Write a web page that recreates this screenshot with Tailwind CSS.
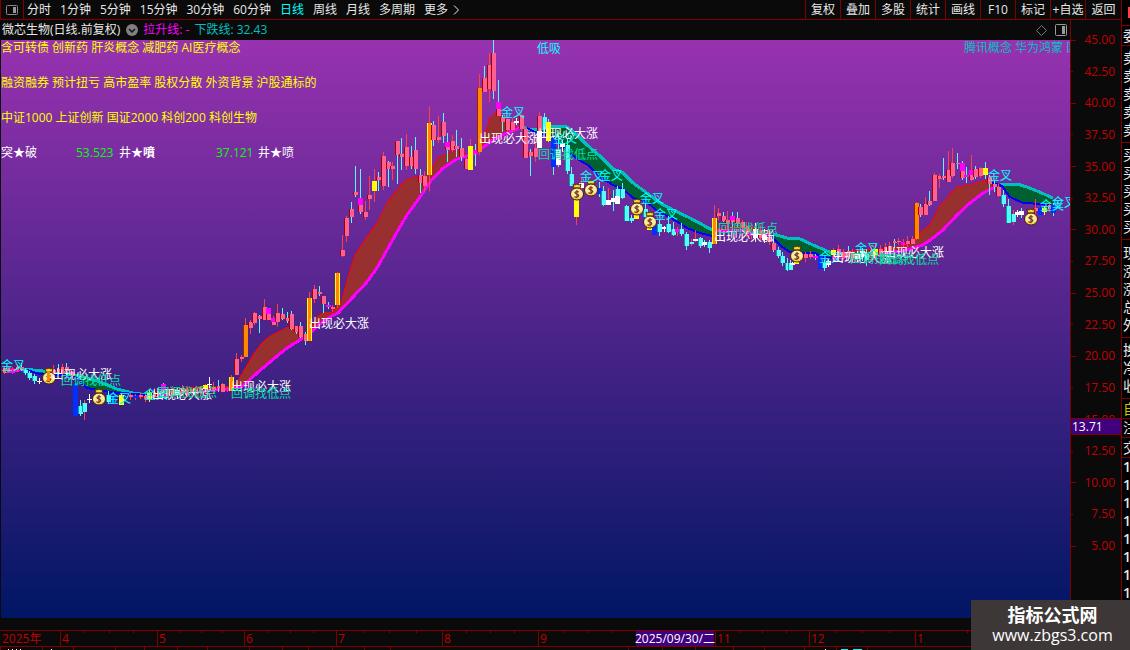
<!DOCTYPE html>
<html lang="zh-CN">
<head>
    <meta charset="UTF-8">
    <title>微芯生物 日线</title>
    <script src="https://cdn.jsdelivr.net/npm/@tailwindcss/browser@4"></script>
</head>
<body class="relative min-h-screen overflow-hidden bg-[#0a0a0a] font-['Open_Sans','Noto_Sans_CJK_SC',sans-serif] text-xs leading-4 text-[#e8e8e8]">
    <div class="flex">
        <main class="min-w-0 flex-1">
            <nav class="flex h-5 items-center border-b border-[#800000]">
                <button aria-label="侧栏" class="flex h-full w-6 items-center justify-center border-r border-l border-[#800000]">
                    <svg class="h-3 w-3" viewBox="0 0 12 12"><rect x="0.5" y="1.5" width="11" height="9" rx="1" fill="none" stroke="#888"/><rect x="7" y="3" width="3" height="6" fill="#999"/></svg>
                </button>
                <div class="flex flex-1 items-center gap-[9px] pl-[3px] whitespace-nowrap">
                    <button>分时</button>
                    <button>1分钟</button>
                    <button>5分钟</button>
                    <button>15分钟</button>
                    <button>30分钟</button>
                    <button>60分钟</button>
                    <button class="text-[#00ffff]">日线</button>
                    <button>周线</button>
                    <button>月线</button>
                    <button>多周期</button>
                    <button class="flex items-center gap-1">更多
                        <svg class="h-[10px] w-2" viewBox="0 0 8 10"><path d="M2 .5l4.500 4.500-4.500 4.500" fill="none" stroke="#e8e8e8"/></svg>
                    </button>
                </div>
                <div class="flex h-full whitespace-nowrap">
                    <button class="w-[35px] border-l border-[#800000]">复权</button>
                    <button class="w-[35px] border-l border-[#800000]">叠加</button>
                    <button class="w-[35px] border-l border-[#800000]">多股</button>
                    <button class="w-[35px] border-l border-[#800000]">统计</button>
                    <button class="w-[35px] border-l border-[#800000]">画线</button>
                    <button class="w-[35px] border-l border-[#800000]">F10</button>
                    <button class="w-[35px] border-l border-[#800000]">标记</button>
                    <button class="w-[35px] border-l border-[#800000]">+自选</button>
                    <button class="w-9 border-l border-[#800000]">返回</button>
                </div>
            </nav>

            <div class="flex">
                <section class="min-w-0 flex-1">
                    <div class="flex h-5 items-center gap-[5px] pl-[2px] whitespace-nowrap">
                        <h1 class="pr-px">微芯生物(日线.前复权)</h1>
                        <svg class="h-3 w-3" viewBox="0 0 12 12"><circle cx="6" cy="6" r="6" fill="#808080"/><path d="M3 5l3 3 3-3" fill="none" stroke="#111" stroke-width="1.5"/></svg>
                        <span class="text-[#ff00ff]">拉升线: -</span>
                        <span class="text-[#00c0c0]">下跌线: 32.43</span>
                        <span class="ml-auto flex items-center gap-2 pr-[3px]">
                            <svg class="h-[11px] w-[11px]" viewBox="0 0 11 11"><path d="M5.500 .5l5 5-5 5-5-5z" fill="none" stroke="#777"/></svg>
                            <svg class="h-3 w-3" viewBox="0 0 12 12"><rect x="0.5" y="0.5" width="11" height="11" rx="1" fill="none" stroke="#999"/><rect x="7" y="2" width="3" height="8" fill="#999"/></svg>
                        </span>
                    </div>
                    <div class="relative border-l border-[#0a0a0a]">
                        <svg id="chart" class="block w-full" viewBox="1 40 1069 578" shape-rendering="crispEdges">
                            <defs>
                                <linearGradient id="sky" x1="0" y1="0" x2="0" y2="1">
                                    <stop offset="0" stop-color="#9832b0"/>
                                    <stop offset="1" stop-color="#001664"/>
                                </linearGradient>
                                <g id="bag" shape-rendering="geometricPrecision">
                                    <path d="M-3-5L-4-9l2 1 2-1 2 1 2-1-1 4z" fill="#f6dc3a" stroke="#5a3000"/>
                                    <ellipse cx="0" cy="1" rx="6.500" ry="6" fill="#f8eca0" stroke="#4a1800"/>
                                    <path d="M-5 3q5 4 10 0q-1 3-5 3t-5-3" fill="#f0c820"/>
                                    <path d="M2-1q-2-1-3.500 0T0 1t1 2.500-3.500 0M0-3v8" fill="none" stroke="#7a3418" stroke-width="1.200"/>
                                </g>
                            </defs>
                            <rect x="1" y="40" width="1069" height="578" fill="url(#sky)"/>
                            <g id="bands" fill="none"></g>
                            <g id="candles"></g>
                            <g id="bags"></g>
                            <g id="signals" font-size="12"></g>
                        </svg>
                        <div class="absolute inset-0 flex flex-col gap-[19px] overflow-hidden whitespace-nowrap text-[#ffff00]">
                            <div class="flex justify-between">
                                <p>含可转债 创新药 肝炎概念 减肥药 AI医疗概念</p>
                                <p class="w-[106px] overflow-hidden text-[#00c0c0]">腾讯概念 华为鸿蒙 国产芯片</p>
                            </div>
                            <p>融资融券 预计扭亏 高市盈率 股权分散 外资背景 沪股通标的</p>
                            <p>中证1000 上证创新 国证2000 科创200 科创生物</p>
                            <p class="flex text-white">
                                <span class="w-[75px]">突★破</span>
                                <span class="w-[43px] text-[#00ff00]">53.523</span>
                                <span class="w-[97px]">井★<b>噴</b></span>
                                <span class="w-[42px] text-[#00ff00]">37.121</span>
                                <span>井★喷</span>
                            </p>
                        </div>
                    </div>
                    <div class="h-3"></div>
                </section>

                <div class="relative w-[51px] border-l border-[#800000] pt-3 text-[#c00000]">
                    <div id="prices" class="flex h-[522px] flex-col justify-between"></div>
                    <div class="absolute top-[398px] right-0 left-0 border-y border-[#800000] bg-[#400080] pl-px leading-[15px] text-white">13.71</div>
                </div>
            </div>

            <div class="grid h-[17px] grid-cols-[60fr_97fr_87fr_92fr_106fr_96fr_98fr_79fr_94fr_106fr_206fr] border-y border-[#800000] leading-[15px] text-[#c00000]">
                <span class="min-w-0 pl-[2px] whitespace-nowrap">2025年</span>
                <span class="month relative border-l border-[#800000] pl-px">4</span>
                <span class="month relative border-l border-[#800000] pl-px">5</span>
                <span class="month relative border-l border-[#800000] pl-px">6</span>
                <span class="month relative border-l border-[#800000] pl-px">7</span>
                <span class="month relative border-l border-[#800000] pl-px">8</span>
                <span class="month relative border-l border-[#800000] pl-px">9</span>
                <span class="mr-px flex min-w-0 justify-center bg-[#400080] whitespace-nowrap text-white">2025/09/30/二</span>
                <span class="month relative border-l border-[#800000] pl-px">11</span>
                <span class="month relative border-l border-[#800000] pl-px">12</span>
                <span class="month relative border-l border-[#800000] pl-px">1</span>
            </div>
            <svg class="block h-[3px] w-full" viewBox="0 0 1121 3" preserveAspectRatio="none" shape-rendering="crispEdges">
                <path d="M.5 0v3M42.500 0v3M73.500 0v3M115.500 0v3M144.500 0v3M177.500 0v3M207.500 0v3M249.500 0v3M282.500 0v3M308.500 0v3M332.500 0v3M364.500 0v3M390.500 0v3M628.500 0v3M662.500 0v3M695.500 0v3M733.500 0v3M764.500 0v3M804.500 0v3M836.500 0v3M867.500 0v3" stroke="#800000"/>
                <path d="M8 2.500h1M12 2.500h1M16 2.500h1M20 2.500h1M51 2.500h1M825 2.500h1" stroke="#fff"/>
                <path d="M841 2.500h7M853 2.500h9" stroke="#00ffff"/>
            </svg>
        </main>

        <aside class="w-[9px] overflow-hidden border-l border-[#800000] bg-black text-sm leading-[18px] whitespace-nowrap">
            <div class="flex h-[26px] justify-end border-b border-[#800000] pt-[7px]"><i class="h-[11px] w-[2px] bg-[#ff4040]"></i></div>
            <div class="border-b border-[#800000] pt-px pl-px">委比</div>
            <div class="border-b border-[#800000] pt-[3px] pb-[3px] pl-px"><p>卖五</p><p>卖四</p><p>卖三</p><p>卖二</p><p>卖一</p></div>
            <div class="border-b border-[#800000] pt-[3px] pb-[3px] pl-px"><p>买一</p><p>买二</p><p>买三</p><p>买四</p><p>买五</p></div>
            <div class="border-b border-[#800000] pt-1 pb-[3px] pl-px"><p>现价</p><p>涨跌</p><p>涨幅</p><p>总量</p><p>外盘</p></div>
            <div class="border-b border-[#800000] pt-[3px] pb-[3px] pl-px"><p>换手</p><p>净资</p><p>收益</p></div>
            <div class="border-b border-[#800000] pt-px pl-px text-[#c8c800]">自选</div>
            <div class="border-b border-[#800000] pl-px">注册</div>
            <div class="border-b border-[#800000] pt-px pl-px">交易</div>
            <div class="pl-px font-semibold"><p>14</p><p>14</p><p>14</p><p>14</p><p>14</p><p>14</p><p>14</p><p>14</p></div>
        </aside>
    </div>

    <div class="absolute right-0 bottom-0 flex h-[50px] w-[159px] flex-col items-center justify-center bg-[#3d3837] pl-1 text-white">
        <strong class="text-lg leading-5">指标公式网</strong>
        <a href="#" class="text-base leading-5">www.zbgs3.com</a>
    </div>

    <script>
        const NS = 'http://www.w3.org/2000/svg';

        function add(parent, tag, attrs, text) {
            const el = document.createElementNS(NS, tag);
            for (const key in attrs) el.setAttribute(key, attrs[key]);
            if (text) el.textContent = text;
            document.getElementById(parent).appendChild(el);
        }

        // price scale, every second mark is a long one
        const prices = document.getElementById('prices');
        for (let i = 0; i < 17; i++) {
            const row = document.createElement('div');
            row.className = 'flex items-center justify-between pr-[6px]';
            const tick = i % 2 ? 'w-[2px]' : 'w-[5px]';
            row.innerHTML = `<i class="h-px ${tick} bg-[#800000]"></i><span>${(45 - i * 2.5).toFixed(2)}</span>`;
            prices.appendChild(row);
        }

        document.querySelectorAll('.month').forEach(cell => {
            const ticks = document.createElement('i');
            ticks.className = 'absolute inset-x-0 top-0 flex justify-evenly';
            ticks.innerHTML = '<b class="h-[2px] w-px bg-[#800000]"></b>'.repeat(3);
            cell.appendChild(ticks);
        });

        // [kind, upper edge, lower edge]
        const bands = [
            ['down', '23,369 43,371 67,373 87,378 100,382 117,389 133,393 147,395', '27,370 40,374 75,376 87,388 110,392 147,395'],
            ['up', '2,369 12,368 23,369', '2,372 15,371 23,369'],
            ['up', '147,394 180,389 205,386 228,386', '147,397 170,394 205,391 228,389'],
            ['up', '228,388 236,384 253,355 262,343 270,336 288,327 300,332 307,337', '220,391 227,389 243,386 257,373 270,362 287,348 303,338 307,337'],
            ['up', '307,337 317,317 323,313 333,312 342,300 348,277 355,255 367,237 377,223 387,203 397,190 407,179 417,177 423,180 430,173 438,158 450,152 460,151 468,155 475,153', '307,337 317,326 330,317 338,313 353,297 367,282 377,268 387,250 397,232 407,215 420,197 430,182 443,168 457,159 475,153'],
            ['up', '475,153 480,150 485,135 490,118 495,113 500,114 503,118 510,125 518,128', '475,153 482,148 493,140 502,135 517,129 522,126'],
            ['down', '523,127 530,130 540,129 557,126 567,127 577,135 587,145 600,156 613,169 622,172 633,183 647,193 660,203 673,210 690,218 703,225 712,230', '527,128 537,133 552,136 563,147 577,159 588,165 600,177 613,185 623,189 633,198 647,202 657,211 673,219 687,228 700,233 712,236'],
            ['up', '716,229 740,226 755,228 770,233', '716,231 740,230 770,235'],
            ['down', '773,234 787,238 800,239 813,245 827,251 832,253', '773,238 782,247 790,252 800,253 815,253 822,257 832,258'],
            ['up', '832,255 860,250 880,249 907,245 917,238 923,230 930,225 940,205 947,198 957,187 970,185 985,180 993,182 997,185', '832,258 870,255 900,251 910,249 923,245 933,238 943,230 957,215 970,203 983,193 995,187'],
            ['down', '1000,184 1017,184 1027,187 1037,191 1053,198', '990,182 1002,186 1010,197 1023,203 1043,204 1053,206']
        ];
        bands.forEach(([kind, upper, lower]) => {
            const up = kind === 'up';
            const back = lower.split(' ').reverse().join(' ');
            add('bands', 'polygon', { points: upper + ' ' + back, fill: up ? '#993030' : '#006030' });
            add('bands', 'polyline', { points: upper, stroke: up ? '#ff0000' : '#00c0c0', 'stroke-width': up ? 1 : 3 });
            add('bands', 'polyline', { points: lower, stroke: up ? '#ff00ff' : '#0000ff', 'stroke-width': up ? 3 : 2 });
        });

        // x, high, body top, body bottom, low, body colour, wick colour
        const candles = `
            4 366 368 373 374 p r,8 367 369 372 373 p r,12 367 369 373 374 m r,17 364 367 370 372 p r,21 363 367 370 371 p c,
            25 368 370 373 375 c c,29 371 373 378 380 c c,34 374 376 381 384 c c,39 378 381 382 384 w w,
            53 365 370 374 378 p r,58 364 369 372 374 p c,62 364 367 374 377 p r,66 363 367 371 375 p c,71 369 372 376 378 p r,
            75 381 384 416 417 b b,80 400 406 414 416 c c,84 400 403 412 420 c r,89 394 399 400 403 w w,
            108 391 395 402 404 c c,113 391 396 401 404 b b,121 393 395 405 405 y y,130 393 395 397 400 p r,135 394 396 398 400 b r,140 392 395 397 399 p r,
            145 394 396 399 402 p r,149 390 393 399 402 y y,154 388 393 397 399 p r,158 388 391 396 399 p r,163 383 384 390 398 m c,168 387 390 396 399 p r,172 386 389 395 397 p r,177 388 390 395 398 w w,182 385 388 393 396 p r,186 386 390 395 398 p r,191 387 389 393 395 p r,196 386 389 394 398 p r,200 386 388 392 396 p r,205 384 385 389 394 y r,209 377 384 385 388 w w,213 382 387 390 394 p r,218 380 386 388 392 p c,222 383 384 392 392 p r,227 388 389 391 392 m r,
            231 375 377 391 391 g r,236 353 359 375 375 p r,241 355 357 359 362 p r,245 318 325 357 357 o r,250 320 322 328 334 p r,254 312 313 323 325 p r,259 315 316 319 333 p c,264 299 307 320 320 p r,268 308 308 320 320 p r,268 308 308 314 314 m m,273 316 318 325 325 p r,273 318 318 322 322 m m,277 304 313 322 327 p r,282 308 314 319 320 p c,287 312 318 321 323 p c,291 311 314 329 330 p c,296 326 326 332 334 p c,300 322 326 337 338 p c,305 332 334 341 345 p c,
            309 292 298 341 341 g r,314 285 289 299 303 p r,319 286 292 294 296 p c,323 296 296 304 313 p c,328 302 305 307 309 m c,332 305 307 309 312 p r,337 272 273 305 308 g r,342 235 250 256 257 p r,346 216 218 236 242 p r,351 202 209 217 223 p c,355 166 192 195 197 p c,360 169 198 212 214 p c,360 198 198 205 205 m m,365 201 212 217 220 p r,369 176 195 199 210 p r,374 169 181 191 202 y r,378 172 177 180 191 p c,383 152 156 186 190 p r,388 161 162 169 187 p c,392 162 166 169 180 p r,397 141 141 155 184 p c,401 138 154 157 170 p c,406 134 147 166 170 p r,411 146 157 166 169 p c,415 137 150 169 174 p c,420 169 175 183 193 p c,424 171 176 186 192 p r,
            429 106 123 175 191 g r,433 121 125 140 146 p c,438 116 137 140 143 p r,443 113 122 136 143 p c,447 133 142 150 162 p c,447 142 142 147 147 m m,452 135 141 150 152 p r,456 130 146 149 157 p c,461 138 148 157 161 p c,466 157 159 169 169 p r,470 139 146 170 170 y r,475 144 150 154 166 m c,479 74 88 152 155 o r,484 66 78 92 92 p c,489 53 65 89 102 p r,493 40 53 91 99 p c,498 80 102 116 116 p c,498 102 102 109 109 m m,502 115 118 122 132 p c,507 117 119 130 132 p r,512 118 122 130 132 p r,516 118 121 123 125 w w,521 113 115 129 131 p r,525 126 129 158 158 p r,530 149 152 156 176 p c,535 141 148 157 162 p r,539 112 116 131 131 p r,539 131 131 148 148 w w,544 113 117 129 133 c c,548 119 122 141 142 y c,553 136 138 167 175 b c,558 140 149 165 167 w c,562 140 143 147 152 w w,567 138 145 171 174 c c,571 167 174 186 186 c c,576 198 200 217 225 y r,581 178 183 188 190 w r,
            599 182 188 194 197 b c,603 186 191 205 206 c c,608 188 200 205 205 w r,613 190 198 202 211 w c,617 186 189 196 198 c c,617 196 196 204 204 w w,622 183 189 198 199 c c,626 205 206 221 221 c c,631 215 218 221 223 c c,636 214 215 219 219 y y,645 203 209 217 222 c c,649 226 227 230 230 y y,654 218 226 235 235 b b,659 220 224 232 236 c c,664 226 227 229 232 w w,668 216 224 232 233 c c,673 222 229 235 236 c c,677 227 229 232 236 m r,681 223 229 234 236 c c,686 232 234 246 250 c c,691 239 242 244 246 c r,695 230 239 241 242 w r,700 237 238 246 248 c c,704 240 242 245 247 w c,709 240 242 248 253 c c,714 205 218 244 244 g r,718 208 213 216 220 p r,723 212 216 221 222 p c,727 211 220 224 230 p r,732 212 216 222 228 p c,732 216 216 220 220 m m,737 212 218 224 227 p c,742 220 222 228 231 p r,746 222 227 234 237 p r,751 227 232 236 239 m r,755 223 229 238 242 w w,760 225 230 238 241 p r,764 229 235 240 243 w w,769 230 237 242 245 p r,773 235 243 250 252 p c,778 247 250 256 258 c c,782 252 256 263 266 c c,787 258 263 270 271 c c,790 260 263 270 270 c c,792 262 263 265 265 w w,796 260 261 264 264 y y,
            805 252 254 258 262 p r,810 251 254 257 259 p r,815 254 256 258 260 m c,820 254 256 269 269 b b,824 260 263 268 271 c c,828 259 261 265 267 w w,833 248 250 255 258 y r,838 245 249 255 259 p r,843 249 252 258 260 p r,848 246 251 257 260 p c,852 249 253 258 262 p r,857 251 254 259 263 w w,862 248 251 257 261 w c,866 249 254 260 266 c c,871 245 250 255 260 p r,875 243 249 255 258 y r,880 245 249 254 256 p r,885 243 247 252 256 p r,889 242 246 251 254 p r,894 239 241 243 248 p c,898 238 241 242 245 p r,903 239 242 245 248 m r,907 236 241 244 247 p r,912 236 239 244 244 p r,
            916 202 203 239 240 o r,920 204 207 215 217 p c,925 197 204 215 215 p r,929 191 201 205 206 p c,934 173 175 201 201 p r,939 174 176 179 188 p r,943 158 176 178 180 p c,948 151 170 182 182 p r,952 148 163 176 178 p r,957 153 163 164 169 p c,962 161 163 178 180 p c,962 163 163 171 171 m m,966 167 175 177 183 m c,971 155 170 180 181 p r,971 170 170 175 175 m m,975 166 169 177 179 p c,980 167 168 176 178 p r,985 162 168 175 179 y c,989 175 177 184 195 p c,994 180 184 187 192 p c,998 184 187 196 197 p r,1003 190 195 204 207 c c,1008 199 206 223 223 c c,1013 210 214 222 225 c r,1017 210 212 215 217 w w,1021 208 211 215 218 w c,1035 199 208 211 215 p r,1040 202 208 215 215 b b,1044 206 208 212 215 y y,1049 202 205 209 212 p r,1053 203 205 213 216 b c`;
        const colors = { p: '#ff6090', r: '#ff4040', c: '#54fcfc', m: '#ff00ff', o: '#ff8800', g: '#ff8800', y: '#ffff00', b: '#0030ff', w: '#ffffff' };
        const edges = { p: '#a00000', o: '#a02000', g: '#ffff00', c: '#00a0a0' };
        candles.split(',').forEach(line => {
            const [x, high, top, bottom, low, body, wick] = line.trim().split(' ').map((v, i) => i < 5 ? Number(v) : v);
            add('candles', 'rect', { x: x, y: high, width: 1, height: low - high, fill: colors[wick] });
            add('candles', 'rect', { x: x - 2, y: top, width: 5, height: bottom - top, fill: edges[body] || colors[body] });
            add('candles', 'rect', { x: x - 1, y: top, width: body === 'g' ? 3 : 4, height: bottom - top, fill: colors[body] });
        });

        [[49, 377], [99, 398], [577, 193], [591, 189], [637, 208], [650, 221], [797, 255], [1031, 218]].forEach(([x, y]) => {
            add('bags', 'use', { href: '#bag', x: x, y: y });
        });
        add('bags', 'rect', { x: 47, y: 371, width: 3, height: 10, fill: '#ff8800' });

        const labels = { g: ['金叉', '#00ffff'], h: ['回调找低点', '#00e0a0'], z: ['出现必大涨', '#ffffff'], d: ['低吸', '#00ffff'] };
        const signals = [
            ['d', 537, 53], ['g', 501, 117], ['h', 538, 159], ['g', 553, 143], ['z', 479, 143], ['z', 538, 138],
            ['g', 580, 181], ['g', 599, 180], ['g', 640, 203], ['g', 654, 219], ['z', 714, 241], ['h', 718, 233],
            ['g', 819, 262], ['g', 855, 253], ['z', 832, 262], ['h', 850, 263], ['z', 884, 257], ['h', 879, 264],
            ['g', 988, 180], ['g', 1040, 210], ['g', 1052, 207], ['g', 1, 370], ['z', 52, 379], ['h', 61, 385],
            ['g', 107, 403], ['g', 144, 399], ['z', 152, 399], ['h', 157, 397], ['z', 231, 391], ['h', 231, 398], ['z', 309, 328]
        ];
        signals.forEach(([kind, x, y]) => {
            add('signals', 'text', { x: x, y: y, fill: labels[kind][1] }, labels[kind][0]);
        });
    </script>
</body>
</html>
